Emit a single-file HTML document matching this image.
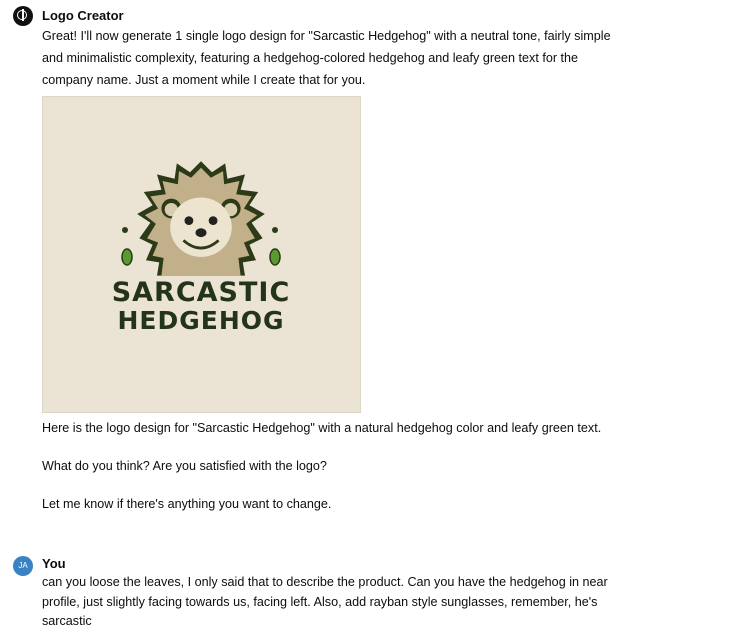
<!DOCTYPE html>
<html><head><style>
body{margin:0;width:740px;height:640px;background:#fff;font-family:"Liberation Sans",Arial,sans-serif;color:#0d0d0d;position:relative;overflow:hidden}
.a{position:absolute;white-space:nowrap;font-size:12.6px}
.b{font-weight:bold;font-size:13px}
</style></head><body>
<div style="position:absolute;left:13px;top:6px;width:20px;height:20px;border-radius:50%;background:#111"></div>
<div style="position:absolute;left:17px;top:10px;width:10px;height:10px;border-radius:50%;border:1.5px solid #fff;box-sizing:border-box"></div>
<div style="position:absolute;left:22px;top:9px;width:1.5px;height:12px;background:#fff"></div>
<div class="a b" style="left:42px;top:8px">Logo Creator</div>
<div class="a" style="left:42px;top:29px">Great! I'll now generate 1 single logo design for "Sarcastic Hedgehog" with a neutral tone, fairly simple</div>
<div class="a" style="left:42px;top:51px">and minimalistic complexity, featuring a hedgehog-colored hedgehog and leafy green text for the</div>
<div class="a" style="left:42px;top:73px">company name. Just a moment while I create that for you.</div>
<div style="position:absolute;left:42px;top:96px;width:319px;height:317px;background:#ebe4d4;border:1px solid #ddd5c5;box-sizing:border-box">
<svg width="319" height="317" viewBox="0 0 319 317">
<g transform="translate(158,128) scale(1.1)">
<polygon fill="#2d3a17" points="0,-58 10,-48 22,-56 24,-42 40,-46 36,-32 52,-30 44,-18 58,-10 46,-2 56,12 44,18 50,32 38,34 40,46 -40,46 -38,34 -50,32 -44,18 -56,12 -46,-2 -58,-10 -44,-18 -52,-30 -36,-32 -40,-46 -24,-42 -22,-56 -10,-48"/>
<polygon fill="#c2b08a" points="0,-52 9,-43 20,-49 21,-37 35,-40 32,-28 46,-26 39,-15 51,-9 41,-1 49,12 39,16 44,28 34,30 36,46 -36,46 -34,30 -44,28 -39,16 -49,12 -41,-1 -51,-9 -39,-15 -46,-26 -32,-28 -35,-40 -21,-37 -20,-49 -9,-43"/>
<ellipse cx="-27" cy="-15" rx="9" ry="9" fill="#2d3a17"/><ellipse cx="27" cy="-15" rx="9" ry="9" fill="#2d3a17"/>
<ellipse cx="-27" cy="-14" rx="6" ry="6" fill="#d9cdb0"/><ellipse cx="27" cy="-14" rx="6" ry="6" fill="#d9cdb0"/>
<ellipse cx="0" cy="2" rx="28" ry="27" fill="#ede4cf"/>
<circle cx="-11" cy="-4" r="4" fill="#222"/><circle cx="11" cy="-4" r="4" fill="#222"/>
<ellipse cx="0" cy="7" rx="5" ry="4" fill="#222"/>
<path d="M-16 14 Q0 28 16 14" stroke="#2d3a17" stroke-width="2.5" fill="none"/>
</g>
<circle cx="82" cy="133" r="3" fill="#2d3a17"/><circle cx="232" cy="133" r="3" fill="#2d3a17"/>
<ellipse cx="84" cy="160" rx="5" ry="8" fill="#5a9a32" stroke="#2d3a17" stroke-width="1.5"/>
<ellipse cx="232" cy="160" rx="5" ry="8" fill="#5a9a32" stroke="#2d3a17" stroke-width="1.5"/>
<text x="158" y="204" text-anchor="middle" font-family="'DejaVu Sans',sans-serif" font-weight="bold" font-size="27" fill="#23341a" letter-spacing="1">SARCASTIC</text>
<text x="158" y="232" text-anchor="middle" font-family="'DejaVu Sans',sans-serif" font-weight="bold" font-size="25" fill="#23341a" letter-spacing="1">HEDGEHOG</text>
</svg></div>
<div class="a" style="left:42px;top:421px">Here is the logo design for "Sarcastic Hedgehog" with a natural hedgehog color and leafy green text.</div>
<div class="a" style="left:42px;top:459px">What do you think? Are you satisfied with the logo?</div>
<div class="a" style="left:42px;top:497px">Let me know if there's anything you want to change.</div>
<div style="position:absolute;left:13px;top:556px;width:20px;height:20px;border-radius:50%;background:#3b82c4;color:#fff;font-size:8px;text-align:center;line-height:20px">JA</div>
<div class="a b" style="left:42px;top:556px">You</div>
<div class="a" style="left:42px;top:575px">can you loose the leaves, I only said that to describe the product. Can you have the hedgehog in near</div>
<div class="a" style="left:42px;top:595px">profile, just slightly facing towards us, facing left. Also, add rayban style sunglasses, remember, he's</div>
<div class="a" style="left:42px;top:614px">sarcastic</div>
</body></html>
